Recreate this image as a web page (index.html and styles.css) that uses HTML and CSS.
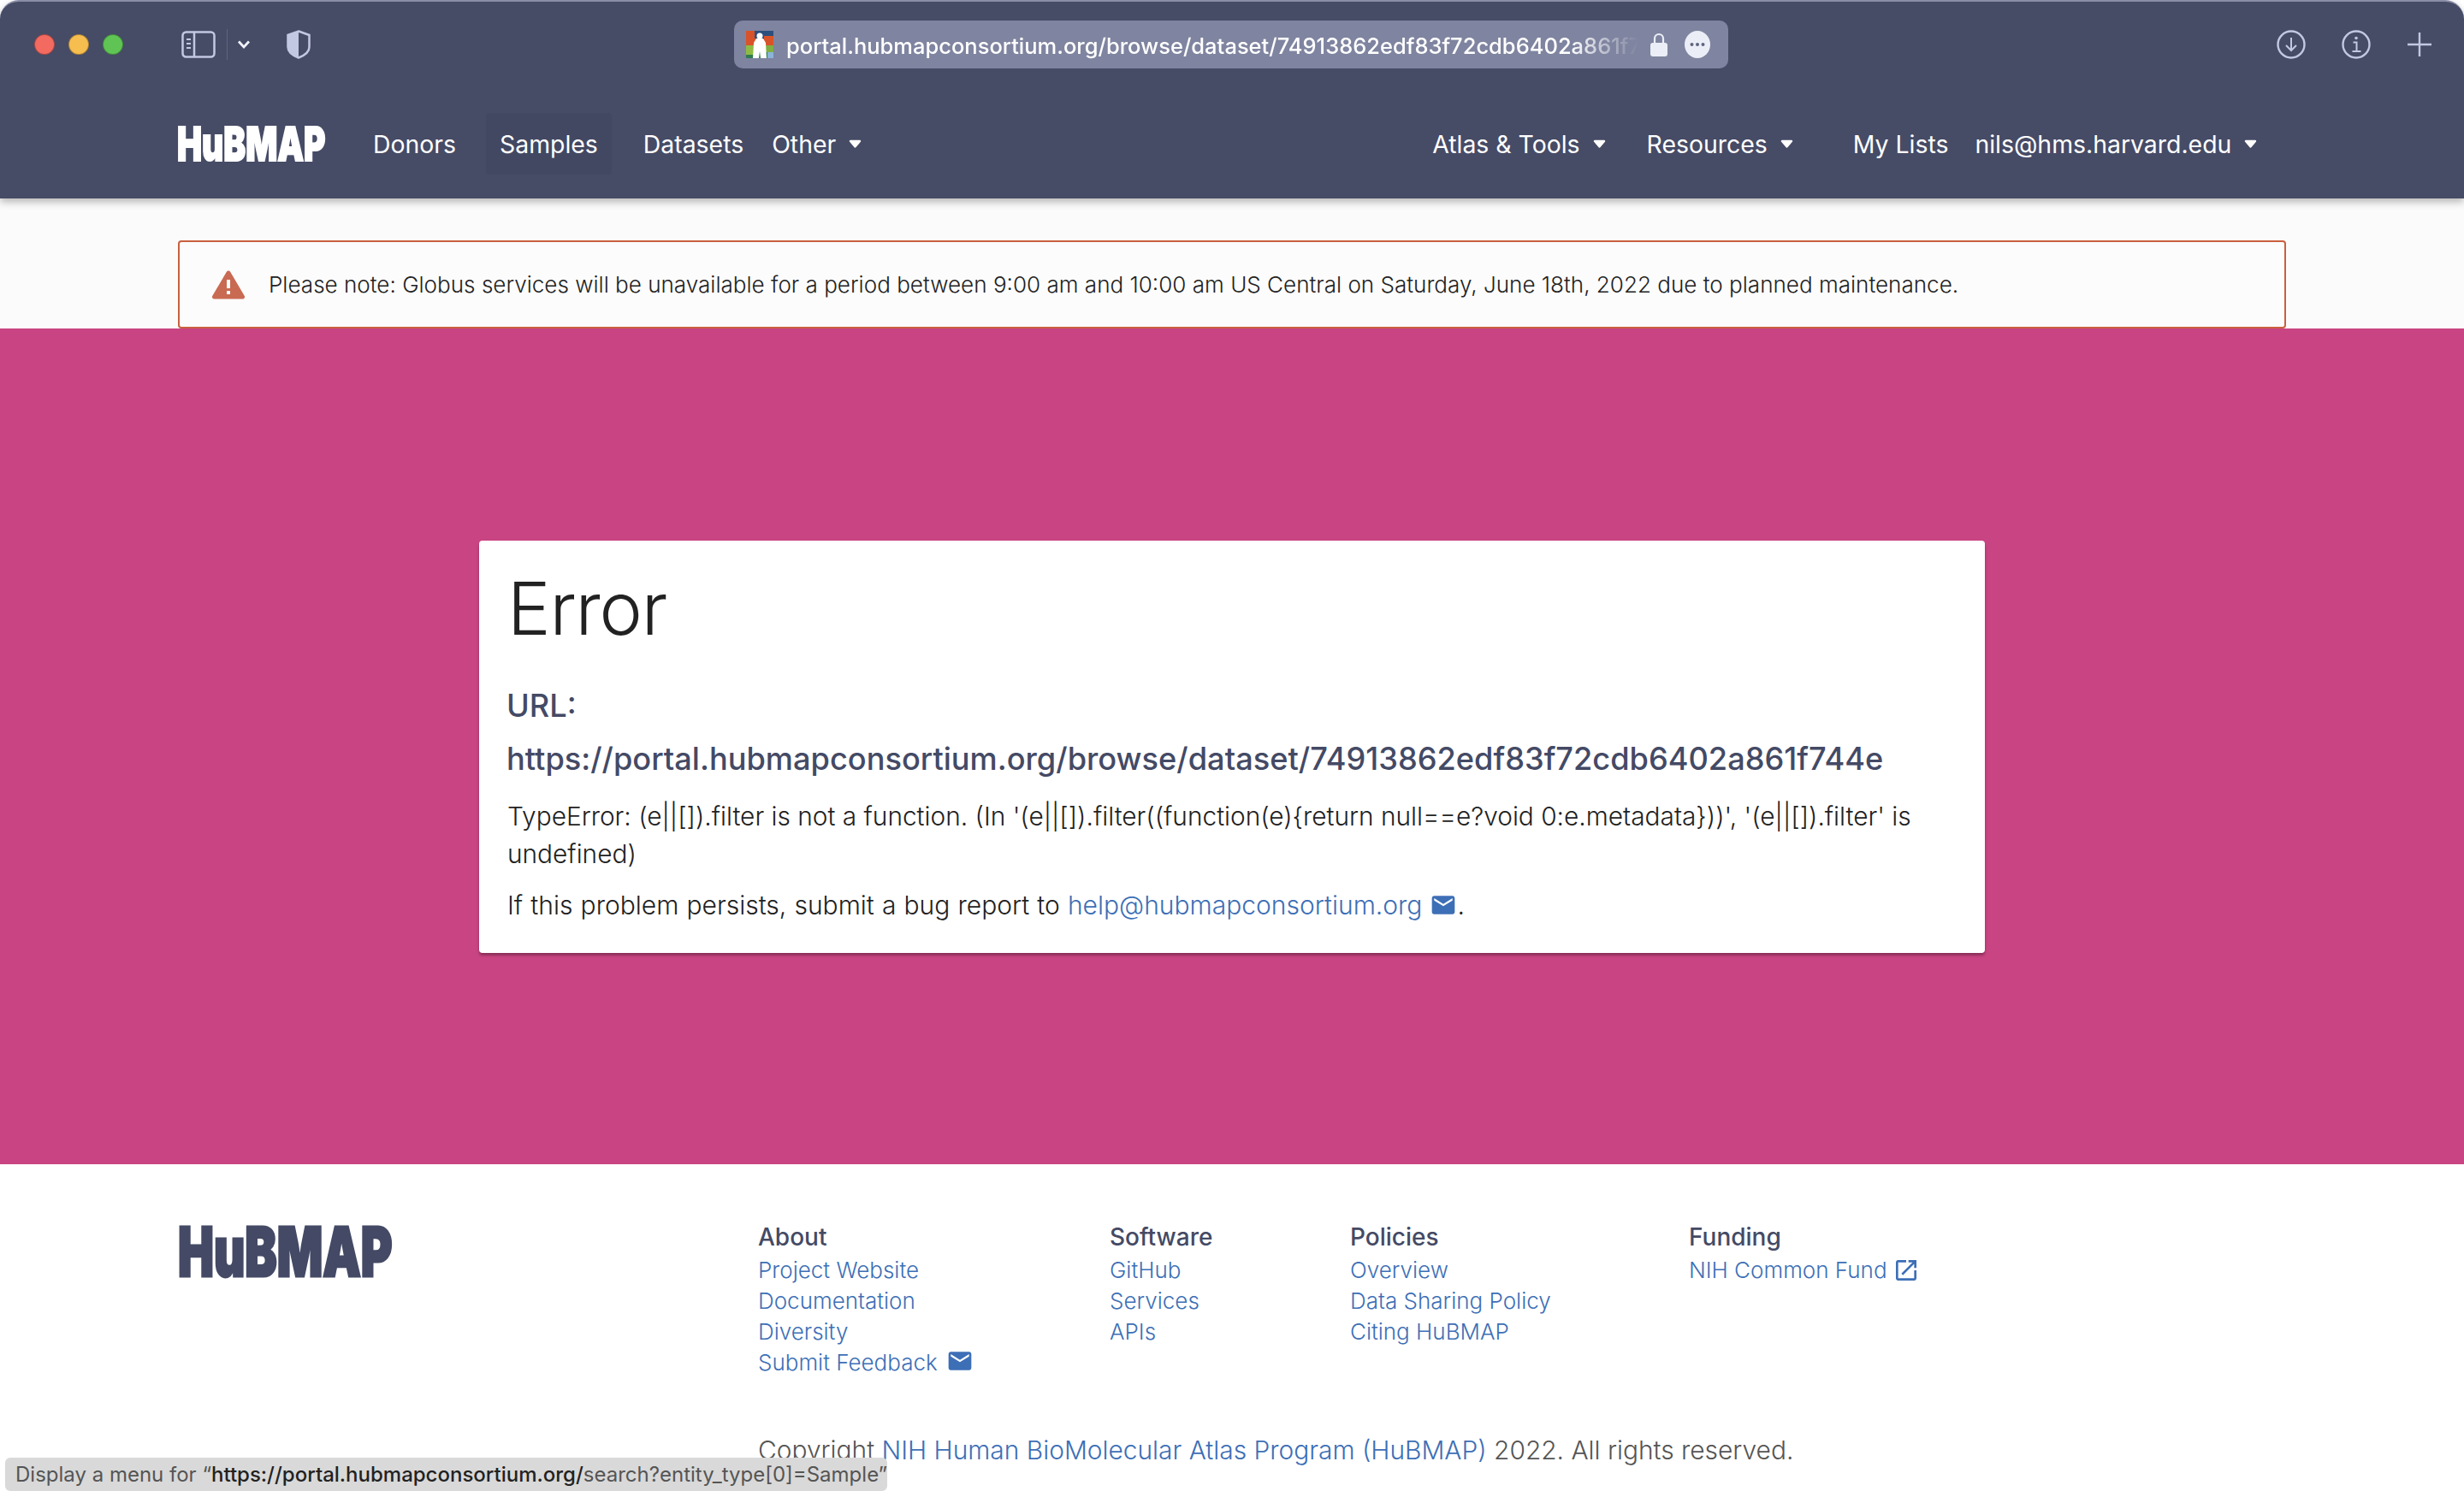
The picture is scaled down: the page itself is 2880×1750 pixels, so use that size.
FILE: index.html
```html
<!DOCTYPE html>
<html lang="en">
<head>
<meta charset="utf-8">
<title>HuBMAP Error</title>
<link rel="stylesheet" href="styles.css">
</head>
<body>
<svg class="defs" width="0" height="0" aria-hidden="true">
  <symbol id="caret" viewBox="0 0 15 10"><path d="M2 2h11L7.500 8.500z" fill="#fff" stroke="#fff" stroke-width="2.400" stroke-linejoin="round"/></symbol>
  <symbol id="mail" viewBox="0 0 24 24"><path d="M20 4H4c-1.100 0-1.990.9-1.990 2L2 18c0 1.100.9 2 2 2h16c1.100 0 2-.9 2-2V6c0-1.100-.9-2-2-2zm0 4l-8 5-8-5V6l8 5 8-5v2z" fill="currentColor"/></symbol>
</svg>
<header class="top">
  <div class="chrome">
    <div class="chrome-left">
      <div class="lights"><i class="light red"></i><i class="light amber"></i><i class="light green"></i></div>
      <svg class="ic-sidebar" viewBox="0 0 40 32"><rect x="1.500" y="1.500" width="37" height="29" rx="4" fill="none" stroke="#c3c8e2" stroke-width="2.500"/><path d="M15 2v28" stroke="#c3c8e2" stroke-width="2.500"/><path d="M6 10h5M6 15h5M6 20h5" stroke="#c3c8e2" stroke-width="2"/></svg>
      <span class="chrome-sep"></span>
      <svg class="ic-chev" viewBox="0 0 16 12"><path d="M2 2.500l6 6.500 6-6.500" fill="none" stroke="#f1f2fa" stroke-width="2.800"/></svg>
      <svg class="ic-shield" viewBox="0 0 28 34"><path d="M14 1.500L26.500 6v14c0 6-6 10-12.500 12.500C7.500 30 1.500 26 1.500 20V6z" fill="none" stroke="#c3c8e2" stroke-width="2.500"/><path d="M14 1.500V32.500C7.500 30 1.500 26 1.500 20V6z" fill="#c3c8e2"/></svg>
    </div>
    <div class="urlbar">
      <svg class="favicon" viewBox="0 0 32 32">
        <rect width="32" height="32" fill="#2f7d4f"/>
        <rect width="14" height="18" fill="#d9532a"/>
        <rect x="10" width="22" height="9" fill="#2d4f7d"/>
        <rect x="21" y="6" width="11" height="12" fill="#d9532a"/>
        <rect y="17" width="9" height="11" fill="#8fbb45"/>
        <rect x="23" y="17" width="9" height="8" fill="#7fae42"/>
        <rect x="25" y="25" width="7" height="7" fill="#8ab4d8"/>
        <circle cx="16" cy="6" r="3.500" fill="#fff"/>
        <path d="M12 9h8l3 5 1 18h-7l-1-8-1 8H8l1-18z" fill="#fff"/>
      </svg>
      <span class="url-text">portal.hubmapconsortium.org/browse/dataset/74913862edf83f72cdb6402a861f744e</span>
      <svg class="ic-lock" viewBox="0 0 20 28"><path d="M5 13V7a5 5 0 0 1 10 0v6" fill="none" stroke="#eceef7" stroke-width="2.200"/><rect y="12" width="20" height="16" rx="3" fill="#eceef7"/></svg>
      <svg class="ic-more" viewBox="0 0 30 32"><ellipse cx="15" cy="16" rx="15" ry="16" fill="#eceef7"/><circle cx="8.500" cy="16" r="2" fill="#60657f"/><circle cx="15" cy="16" r="2" fill="#60657f"/><circle cx="21.500" cy="16" r="2" fill="#60657f"/></svg>
    </div>
    <div class="chrome-right">
      <svg class="ic-round" viewBox="0 0 34 34"><circle cx="17" cy="17" r="15.500" fill="none" stroke="#c3c8e2" stroke-width="2.400"/><path d="M17 9v15M11 18l6 6 6-6" fill="none" stroke="#c3c8e2" stroke-width="2"/></svg>
      <svg class="ic-round" viewBox="0 0 34 34"><circle cx="17" cy="17" r="15.500" fill="none" stroke="#c3c8e2" stroke-width="2.400"/><circle cx="17" cy="9.500" r="1.800" fill="#c3c8e2"/><path d="M13.500 14.500H17.500V25M12.500 25h10" fill="none" stroke="#c3c8e2" stroke-width="2"/></svg>
      <svg class="ic-plus" viewBox="0 0 28 28"><path d="M14 0v28M0 14h28" stroke="#c3c8e2" stroke-width="2.400"/></svg>
    </div>
  </div>
  <nav class="nav">
    <span class="logo logo-nav">HuBMAP</span>
    <a class="nav-item donors">Donors</a>
    <a class="nav-item samples">Samples</a>
    <a class="nav-item datasets">Datasets</a>
    <a class="nav-item other">Other<svg class="caret"><use href="#caret"/></svg></a>
    <a class="nav-item atlas">Atlas &amp; Tools<svg class="caret"><use href="#caret"/></svg></a>
    <a class="nav-item resources">Resources<svg class="caret"><use href="#caret"/></svg></a>
    <a class="nav-item lists">My Lists</a>
    <a class="nav-item user">nils@hms.harvard.edu<svg class="caret"><use href="#caret"/></svg></a>
  </nav>
</header>

<div class="notice-band">
  <div class="notice">
    <svg class="ic-warn" viewBox="0 0 38 34"><path d="M19 3L35.500 31H2.500z" fill="#c96a52" stroke="#c96a52" stroke-width="5" stroke-linejoin="round"/><rect x="17" y="11" width="4" height="10" fill="#fff"/><rect x="17" y="24" width="4" height="4" fill="#fff"/></svg>
    <p class="notice-text">Please note: Globus services will be unavailable for a period between 9:00 am and 10:00 am US Central on Saturday, June 18th, 2022 due to planned maintenance.</p>
  </div>
</div>

<main class="stage">
  <section class="card">
    <h1 class="card-title">Error</h1>
    <h2 class="card-url">URL:<br>https://portal.hubmapconsortium.org/browse/dataset/74913862edf83f72cdb6402a861f744e</h2>
    <p class="card-body">TypeError: (e||[]).filter is not a function. (In '(e||[]).filter((function(e){return null==e?void 0:e.metadata}))', '(e||[]).filter' is undefined)</p>
    <p class="card-body card-last">If this problem persists, submit a bug report to <a class="link">help@hubmapconsortium.org</a><svg class="ic-mail link"><use href="#mail"/></svg>.</p>
  </section>
</main>

<footer class="foot">
  <div class="foot-grid">
    <span class="logo logo-foot">HuBMAP</span>
    <div class="foot-col">
      <h3 class="foot-head">About</h3>
      <a class="link">Project Website</a>
      <a class="link">Documentation</a>
      <a class="link">Diversity</a>
      <a class="link">Submit Feedback<svg class="ic-mail ic-mail-foot"><use href="#mail"/></svg></a>
    </div>
    <div class="foot-col">
      <h3 class="foot-head">Software</h3>
      <a class="link">GitHub</a>
      <a class="link">Services</a>
      <a class="link">APIs</a>
    </div>
    <div class="foot-col">
      <h3 class="foot-head">Policies</h3>
      <a class="link">Overview</a>
      <a class="link">Data Sharing Policy</a>
      <a class="link">Citing HuBMAP</a>
    </div>
    <div class="foot-col">
      <h3 class="foot-head">Funding</h3>
      <a class="link">NIH Common Fund<svg class="ic-ext" viewBox="0 0 24 24"><path d="M19 19H5V5h7V3H5c-1.110 0-2 .9-2 2v14c0 1.100.89 2 2 2h14c1.100 0 2-.9 2-2v-7h-2v7zM14 3v2h3.590l-9.830 9.830 1.410 1.410L19 6.410V10h2V3h-7z" fill="currentColor"/></svg></a>
    </div>
  </div>
  <p class="copyright">Copyright <a class="link">NIH Human BioMolecular Atlas Program (HuBMAP)</a> 2022. All rights reserved.</p>
</footer>

<div class="status"><span>Display a menu for “<b>https://portal.hubmapconsortium.org/</b>search?entity_type[0]=Sample”</span></div>
</body>
</html>
```
FILE: styles.css
```css
* { box-sizing: border-box; }
html, body { margin: 0; padding: 0; }
body {
  width: 2880px;
  height: 1750px;
  overflow: hidden;
  position: relative;
  background: #fff;
  font-family: Inter, "Liberation Sans", sans-serif;
  color: #222;
}
a { text-decoration: none; }
.defs { position: absolute; }

.top {
  position: relative;
  z-index: 2;
  height: 232px;
  background: #464b66;
  border-top: 2px solid #8a8ea6;
  border-radius: 22px 22px 0 0;
  box-shadow: 0 4px 10px rgba(0, 0, 0, .28);
}

.chrome {
  display: flex;
  align-items: center;
  height: 102px;
  padding: 22px 0 24px;
}
.chrome-left {
  display: flex;
  align-items: center;
  width: 858px;
  padding-left: 40px;
}
.lights { display: flex; gap: 16px; margin-right: 68px; }
.light { display: block; width: 24px; height: 24px; border-radius: 50%; border: 1px solid rgba(0,0,0,.3); }
.red { background: #f26a60; }
.amber { background: #f6bd4f; }
.green { background: #5fc454; }
.ic-sidebar { width: 40px; height: 32px; }
.chrome-sep { width: 1px; height: 36px; background: #5f6480; margin-left: 13px; }
.ic-chev { width: 16px; height: 12px; margin-left: 11px; }
.ic-shield { width: 28px; height: 34px; margin-left: 42px; }

.urlbar {
  display: flex;
  align-items: center;
  width: 1162px;
  height: 56px;
  padding: 0 21px 0 14px;
  background: #7f84a0;
  border-radius: 10px;
}
.favicon { width: 32px; height: 32px; flex: none; }
.url-text {
  flex: 1;
  min-width: 0;
  margin-left: 15px;
  padding-top: 2px;
  overflow: hidden;
  white-space: nowrap;
  font-size: 25.500px;
  font-weight: 500;
  color: #fff;
  -webkit-mask-image: linear-gradient(90deg, #000 92%, transparent 100%);
  mask-image: linear-gradient(90deg, #000 92%, transparent 100%);
}
.ic-lock { width: 20px; height: 28px; flex: none; margin-left: 14px; }
.ic-more { width: 30px; height: 32px; flex: none; margin-left: 20px; }

.chrome-right {
  flex: 1;
  display: flex;
  align-items: center;
  justify-content: flex-end;
  gap: 42px;
  padding-right: 38px;
}
.ic-round { width: 34px; height: 34px; }
.ic-plus { width: 28px; height: 28px; margin-left: 1px; }

.nav {
  display: flex;
  align-items: center;
  height: 72px;
  margin-top: 28px;
  padding-left: 207px;
}
.logo {
  display: block;
  font-family: Inter, "Liberation Sans", sans-serif;
  font-weight: 900;
  white-space: nowrap;
  transform-origin: left center;
}
.logo-nav {
  width: 229px;
  font-size: 55px;
  line-height: 72px;
  color: #fff;
  transform: scaleX(.705);
  -webkit-text-stroke: 2px #fff;
}
.nav-item {
  display: flex;
  align-items: center;
  height: 72px;
  font-size: 28.400px;
  color: #fff;
  white-space: nowrap;
}
.caret { width: 15px; height: 10px; margin-left: 15px; }
.samples { margin-left: 35px; padding: 0 16px; background: #434862; border-radius: 4px; }
.datasets { margin-left: 37px; }
.other { margin-left: 33px; }
.atlas { margin-left: 667px; }
.resources { margin-left: 48px; }
.lists { margin-left: 70px; }
.user { margin-left: 31px; }

.notice-band {
  padding: 49px 208px 0;
  height: 152px;
  background: #fbfbfb;
}
.notice {
  display: flex;
  align-items: center;
  height: 103px;
  padding-left: 38px;
  border: 2px solid #c9603f;
  border-radius: 4px;
  background: #fcfcfc;
}
.ic-warn { width: 38px; height: 34px; flex: none; }
.notice-text {
  margin: 0 0 0 28px;
  font-size: 26.070px;
  font-weight: 300;
  white-space: nowrap;
  color: #222;
}

.stage {
  display: flex;
  align-items: center;
  justify-content: center;
  height: 977px;
  background: #c94482;
}
.card {
  width: 1760px;
  height: 482px;
  padding: 32px 33px 33px;
  background: #fff;
  border-radius: 4px;
  box-shadow: 0 3px 3px rgba(0, 0, 0, .3);
}
.card-title {
  margin: 0;
  font-size: 85px;
  line-height: 96px;
  font-weight: 300;
  letter-spacing: -1.200px;
  color: #222;
}
.card-url {
  margin: 34px 0 0 -1px;
  font-size: 36.200px;
  line-height: 62px;
  font-weight: 500;
  color: #444a65;
}
.card-body {
  margin: 14px 0 0;
  font-size: 29.830px;
  line-height: 44px;
  font-weight: 300;
  color: #222;
}
.card-last { margin-top: 16px; font-size: 30px; word-spacing: .7px; }
.link { color: #3d6fb6; }
.ic-mail { width: 32px; height: 32px; margin-left: 9px; vertical-align: -5px; }
.ic-mail-foot { color: #3d6fb6; margin-left: 10px; vertical-align: -5px; }

.foot { height: 389px; padding: 68px 0 0 208px; }
.foot-grid { display: grid; grid-template-columns: 678px 411px 281px 396px 1fr; margin-top: -1px; }
.logo-foot {
  font-size: 80px;
  line-height: 66px;
  padding-top: 2px;
  color: #444a65;
  transform: scaleX(.7);
  -webkit-text-stroke: 3px #444a65;
}
.foot-col { display: flex; flex-direction: column; font-size: 26px; line-height: 36px; font-weight: 300; }
.foot-head { margin: 0 0 2px; font-size: 28px; line-height: 37px; font-weight: 500; color: #444a65; }
.foot-col .link { display: block; white-space: nowrap; }
.ic-ext { width: 32px; height: 32px; margin-left: 6px; vertical-align: -7px; }
.copyright { margin: 62px 0 0 678px; font-size: 29.900px; line-height: 44px; font-weight: 300; color: #555; white-space: nowrap; }

.status {
  position: absolute;
  left: 6px;
  bottom: 7px;
  z-index: 3;
  width: 1031px;
  height: 39px;
  padding-left: 12px;
  display: flex;
  align-items: center;
  background: #d9d9d9;
  border-radius: 6px;
  font-size: 24px;
  color: #555;
  white-space: nowrap;
}
.status b { font-weight: 500; color: #222; }
```
